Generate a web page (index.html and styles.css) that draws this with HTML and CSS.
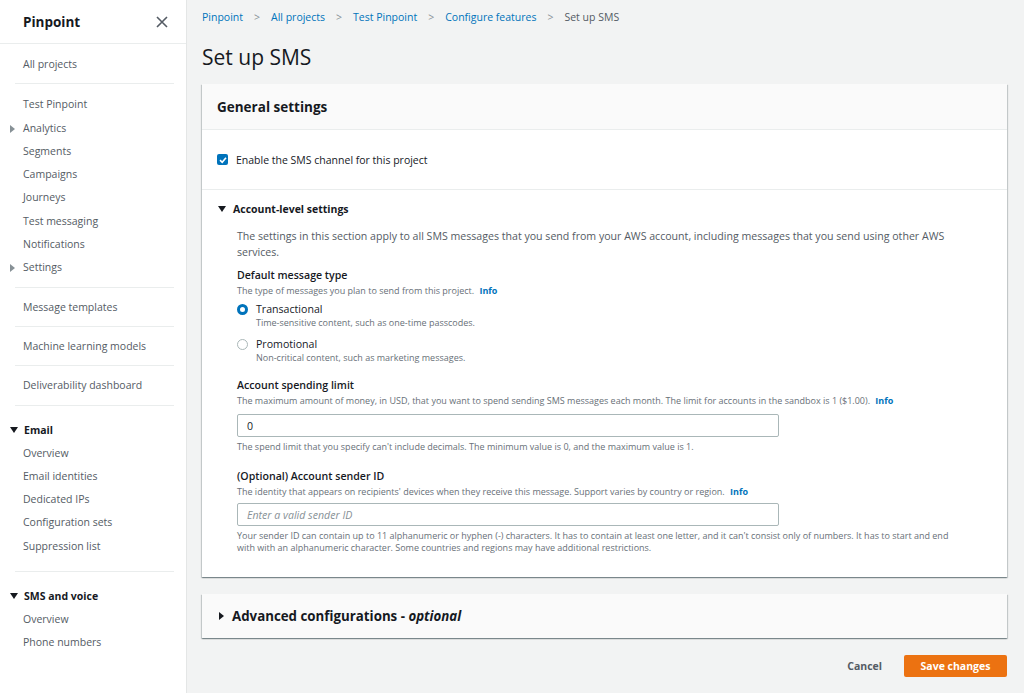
FILE: index.html
```html
<!DOCTYPE html>
<html>
<head>
<meta charset="utf-8">
<link rel="stylesheet" href="styles.css">
</head>
<body>
<div class="app">
  <nav class="sidebar">
    <div class="side-head">
      <span class="side-title">Pinpoint</span>
      <svg class="close" width="12" height="12" viewBox="0 0 12 12"><path d="M1 1L11 11M11 1L1 11" stroke="#545b64" stroke-width="1.6" fill="none"/></svg>
    </div>
    <div class="side-group first"><a class="item">All projects</a></div>
    <div class="side-group first">
      <a class="item">Test Pinpoint</a>
      <a class="item"><span class="caret-r"></span>Analytics</a>
      <a class="item">Segments</a>
      <a class="item">Campaigns</a>
      <a class="item">Journeys</a>
      <a class="item">Test messaging</a>
      <a class="item">Notifications</a>
      <a class="item"><span class="caret-r"></span>Settings</a>
    </div>
    <div class="side-group"><a class="item">Message templates</a></div>
    <div class="side-group"><a class="item">Machine learning models</a></div>
    <div class="side-group"><a class="item">Deliverability dashboard</a></div>
    <div class="side-group expand">
      <div class="sec"><span class="caret-d"></span>Email</div>
      <a class="item">Overview</a>
      <a class="item">Email identities</a>
      <a class="item">Dedicated IPs</a>
      <a class="item">Configuration sets</a>
      <a class="item">Suppression list</a>
    </div>
    <div class="side-group expand last">
      <div class="sec"><span class="caret-d"></span>SMS and voice</div>
      <a class="item">Overview</a>
      <a class="item">Phone numbers</a>
    </div>
  </nav>
  <main class="main">
    <div class="crumbs">
      <a>Pinpoint</a><span class="sep">&gt;</span>
      <a>All projects</a><span class="sep">&gt;</span>
      <a>Test Pinpoint</a><span class="sep">&gt;</span>
      <a>Configure features</a><span class="sep">&gt;</span>
      <span class="cur">Set up SMS</span>
    </div>
    <h1 class="title">Set up SMS</h1>
    <section class="card">
      <div class="card-head">General settings</div>
      <div class="check-row">
        <span class="checkbox"><svg width="10" height="10" viewBox="0 0 10 10"><path d="M2 5.2L4.2 7.3L8 2.8" stroke="#fff" stroke-width="1.6" fill="none"/></svg></span>
        <span>Enable the SMS channel for this project</span>
      </div>
      <div class="acct">
        <div class="acct-head"><span class="caret-d"></span>Account-level settings</div>
        <div class="acct-body">
          <p class="intro">The settings in this section apply to all SMS messages that you send from your AWS account, including messages that you send using other AWS services.</p>
          <div class="field">
            <div class="label">Default message type</div>
            <div class="desc">The type of messages you plan to send from this project. <a class="info">Info</a></div>
            <div class="radio-opt">
              <span class="radio on"></span>
              <div><div class="opt-title">Transactional</div><div class="desc">Time-sensitive content, such as one-time passcodes.</div></div>
            </div>
            <div class="radio-opt">
              <span class="radio"></span>
              <div><div class="opt-title">Promotional</div><div class="desc">Non-critical content, such as marketing messages.</div></div>
            </div>
          </div>
          <div class="field">
            <div class="label">Account spending limit</div>
            <div class="desc">The maximum amount of money, in USD, that you want to spend sending SMS messages each month. The limit for accounts in the sandbox is 1 ($1.00). <a class="info">Info</a></div>
            <div class="input">0</div>
            <div class="desc hint">The spend limit that you specify can't include decimals. The minimum value is 0, and the maximum value is 1.</div>
          </div>
          <div class="field sender">
            <div class="label">(Optional) Account sender ID</div>
            <div class="desc">The identity that appears on recipients' devices when they receive this message. Support varies by country or region. <a class="info">Info</a></div>
            <div class="input ph">Enter a valid sender ID</div>
            <div class="desc hint">Your sender ID can contain up to 11 alphanumeric or hyphen (-) characters. It has to contain at least one letter, and it can't consist only of numbers. It has to start and end with with an alphanumeric character. Some countries and regions may have additional restrictions.</div>
          </div>
        </div>
      </div>
    </section>
    <section class="card adv">
      <span class="caret-r dark"></span><span>Advanced configurations - <em>optional</em></span>
    </section>
    <div class="actions">
      <a class="cancel">Cancel</a>
      <a class="save">Save changes</a>
    </div>
  </main>
</div>
</body>
</html>
```
FILE: styles.css
```css
* { box-sizing: border-box; }
html, body { margin: 0; padding: 0; }
body {
  font-family: "Open Sans", "Noto Sans", sans-serif;
  color: #16191f;
  background: #f2f3f3;
  width: 1024px;
  height: 693px;
  overflow: hidden;
}
a { text-decoration: none; }
.app { display: flex; height: 693px; }
.sidebar {
  width: 187px;
  flex: none;
  background: #fff;
  border-right: 1px solid #e4e6e6;
  font-size: 10.5px;
  color: #545b64;
}
.side-head {
  height: 44px;
  display: flex;
  align-items: center;
  justify-content: space-between;
  padding: 0 18px 0 23px;
  border-bottom: 1px solid #eaeded;
}
.side-title { font-size: 13.5px; font-weight: 700; color: #16191f; }
.side-group {
  margin: 0 12px 0 15px;
  padding: 8px 0 7px;
  border-bottom: 1px solid #eaeded;
  display: flex;
  flex-direction: column;
}
.side-group.first { padding-top: 9px; }
.side-group.expand { padding: 12px 0 13px; }
.side-group.last { border-bottom: none; }
.item {
  position: relative;
  padding-left: 8px;
  line-height: 23.3px;
  color: #545b64;
}
.sec {
  position: relative;
  padding-left: 9px;
  line-height: 24px;
  font-weight: 700;
  color: #16191f;
}
.caret-r {
  display: inline-block;
  width: 0; height: 0;
  border-top: 4px solid transparent;
  border-bottom: 4px solid transparent;
  border-left: 5px solid #879196;
  position: absolute;
  left: -5px;
  top: 8px;
}
.caret-d {
  display: inline-block;
  width: 0; height: 0;
  border-left: 4px solid transparent;
  border-right: 4px solid transparent;
  border-top: 6px solid #16191f;
  margin-right: 7px;
  vertical-align: 1px;
}
.sec .caret-d { position: absolute; left: -5px; top: 9px; margin: 0; }
.main {
  flex: 1;
  padding: 0 17px 0 15px;
}
.crumbs {
  height: 34px;
  display: flex;
  align-items: center;
  font-size: 10.5px;
}
.crumbs a { color: #0073bb; }
.crumbs .sep { color: #879196; margin: 0 11px; }
.crumbs .cur { color: #545b64; }
.title {
  margin: 0;
  font-size: 21px;
  font-weight: 400;
  line-height: 30px;
  height: 50px;
  padding-top: 8px;
  color: #16191f;
}
.card {
  background: #fff;
  box-shadow: 0 1px 1px 0 rgba(0,28,36,.3), 1px 1px 1px 0 rgba(0,28,36,.15), -1px 1px 1px 0 rgba(0,28,36,.15);
}
.card-head {
  background: #fafafa;
  height: 46px;
  display: flex;
  align-items: center;
  padding-left: 15px;
  font-size: 13.5px;
  font-weight: 700;
  border-bottom: 1px solid #eaeded;
}
.check-row {
  height: 60px;
  display: flex;
  align-items: center;
  padding-left: 15px;
  font-size: 10.5px;
  border-bottom: 1px solid #eaeded;
}
.checkbox {
  width: 11px; height: 11px;
  background: #0073bb;
  border-radius: 2px;
  display: inline-flex;
  align-items: center;
  justify-content: center;
  margin-right: 8px;
}
.acct { padding: 10px 20px 23px 15px; }
.acct-head { font-size: 10.5px; font-weight: 700; line-height: 18px; }
.acct-head .caret-d { margin-left: 1px; margin-right: 7px; }
.acct-body { padding-left: 20px; padding-top: 10px; max-width: 760px; }
.intro { margin: 0 0 7px; font-size: 10.6px; line-height: 16px; color: #545b64; max-width: 718px; }
.field { margin-bottom: 13px; }
.field.sender { margin-top: 15px; margin-bottom: 0; }
.label { font-size: 10.6px; font-weight: 600; line-height: 16px; color: #16191f; margin-bottom: 2px; }
.desc { font-size: 9px; line-height: 12px; color: #687078; }
.info { color: #0073bb; font-weight: 700; margin-left: 3px; }
.radio-opt { display: flex; margin-top: 4px; }
.radio-opt + .radio-opt { margin-top: 7px; }
.radio {
  width: 11px; height: 11px;
  border-radius: 50%;
  border: 1px solid #aab7b8;
  margin-right: 8px;
  margin-top: 3px;
  flex: none;
}
.radio.on { border: 3px solid #0073bb; }
.opt-title { font-size: 10.6px; line-height: 16px; color: #16191f; }
.input {
  width: 542px;
  height: 23px;
  border: 1px solid #aab7b8;
  border-radius: 2px;
  margin-top: 7px;
  display: flex;
  align-items: center;
  padding-left: 9px;
  font-size: 10.6px;
  color: #16191f;
}
.sender .input { margin-top: 5px; }
.input.ph { color: #879196; font-style: italic; }
.hint { margin-top: 4px; max-width: 725px; }
.adv {
  margin-top: 17px;
  height: 44px;
  background: #fafafa;
  display: flex;
  align-items: center;
  padding-left: 17px;
  font-size: 13.3px;
  font-weight: 700;
  position: relative;
}
.adv .caret-r { position: static; border-left-color: #16191f; margin-right: 8px; }
.adv em { font-style: italic; }
.actions {
  display: flex;
  justify-content: flex-end;
  align-items: center;
  margin-top: 17px;
  gap: 22px;
}
.cancel { font-size: 10.5px; font-weight: 700; color: #545b64; }
.save {
  background: #ec7211;
  color: #fff;
  font-size: 10.5px;
  font-weight: 700;
  height: 22px;
  width: 103px;
  display: flex;
  align-items: center;
  justify-content: center;
  border-radius: 2px;
}
```
